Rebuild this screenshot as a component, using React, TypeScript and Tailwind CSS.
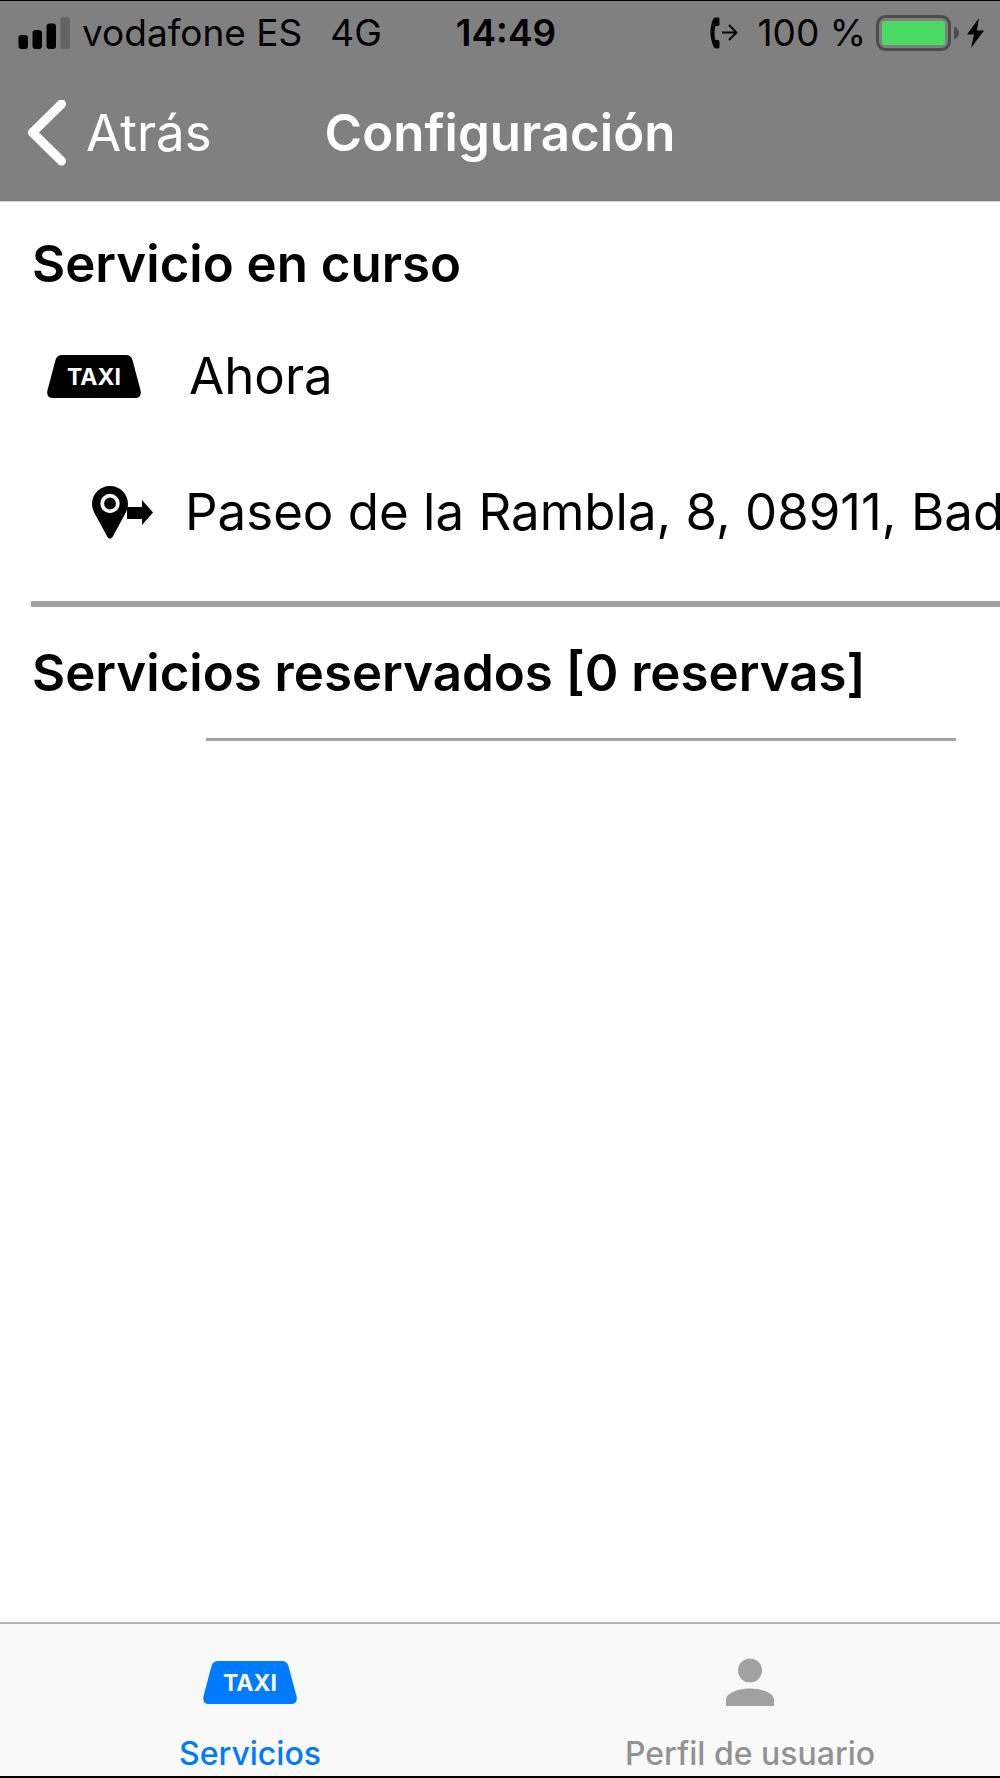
import React, { useState } from "react";

type Tab = "servicios" | "perfil";

const TaxiIcon = ({ textColor }: { textColor: string }) => (
  <svg width="94" height="43" viewBox="0 0 94 43" aria-hidden="true">
    <path
      d="M15 0H79Q84 0 85.500 5L93.700 36Q94.500 43 88 43H6Q-0.500 43 0.300 36L8.500 5Q10 0 15 0Z"
      fill="currentColor"
    />
    <text
      x="47"
      y="30"
      textAnchor="middle"
      fontSize="23"
      fontWeight="700"
      fill={textColor}
    >
      TAXI
    </text>
  </svg>
);

const PinIcon = () => (
  <svg width="61" height="53" viewBox="0 0 61 53" aria-hidden="true">
    <path d="M18 0C8 0 0 8 0 18C0 22 1.500 25.500 3.500 29L15.500 51Q18 54.500 20.500 51L32.500 29C34.500 25.500 36 22 36 18C36 8 28 0 18 0Z" />
    <circle cx="18" cy="17.500" r="7.800" fill="none" stroke="#fff" strokeWidth="3.800" />
    <path d="M35 21H50V14L61 26.500L50 39V33H35Z" />
  </svg>
);

const SignalIcon = () => (
  <svg width="52" height="32" viewBox="0 0 52 32" aria-hidden="true">
    <rect x="0.500" y="18" width="9.500" height="14" rx="3" />
    <rect x="14.500" y="13" width="9.500" height="19" rx="3" />
    <rect x="28.500" y="6.500" width="9.500" height="25.500" rx="3" />
    <rect x="42.500" y="0" width="9.500" height="32" rx="3" fill="#636363" />
  </svg>
);

const CallForwardIcon = () => (
  <svg width="28" height="32" viewBox="0 0 28 32" aria-hidden="true">
    <path d="M5 0.500H8Q9.500 0.500 9.500 2V7Q9.500 9 8 9H5.500Q3.500 16 5.500 23H8Q9.500 23 9.500 25V30Q9.500 31.500 8 31.500H6Q4 31.500 2.500 27Q-1.500 16 2 5Q3 1 5 0.500Z" />
    <path d="M12 15.500H26M19 8L26.500 15.500L19 23" fill="none" stroke="#000" strokeWidth="1.800" />
  </svg>
);

const BatteryIcon = () => (
  <svg width="83" height="36" viewBox="0 0 83 36" aria-hidden="true">
    <rect x="1.500" y="1.500" width="72" height="33" rx="8" fill="none" stroke="#4c4c4c" strokeWidth="3" />
    <rect x="6" y="6" width="63" height="24" rx="2.500" fill="#4cd964" />
    <path d="M78 11.500Q83 14 83 18Q83 22 78 24.500Z" fill="#4c4c4c" />
  </svg>
);

const BoltIcon = () => (
  <svg width="17" height="30" viewBox="0 0 17 30" aria-hidden="true">
    <path d="M12 0L0 16.500H7L4 30L17 12.500H10Z" />
  </svg>
);

const UserIcon = () => (
  <svg width="48" height="48" viewBox="0 0 48 48" fill="#a1a1a1" aria-hidden="true">
    <circle cx="24" cy="12.500" r="12" />
    <path d="M0 48V42C0 35 12 30.500 24 30.500S48 35 48 42V48Z" />
  </svg>
);

const StatusBar = () => (
  <div className="grid h-16 grid-cols-[1fr_auto_1fr] items-center pl-[18px] pr-[6px] text-[37px] text-black">
    <div className="flex items-center whitespace-nowrap">
      <SignalIcon />
      <span className="ml-3">vodafone ES</span>
      <span className="ml-7">4G</span>
    </div>
    <span className="font-semibold">14:49</span>
    <div className="flex items-center justify-end whitespace-nowrap pr-2.5">
      <CallForwardIcon />
      <span className="ml-5">100 %</span>
      <span className="ml-2.5">
        <BatteryIcon />
      </span>
      <span className="ml-2">
        <BoltIcon />
      </span>
    </div>
  </div>
);

const NavBar = () => (
  <div className="grid h-[136px] grid-cols-[1fr_auto_1fr] items-center px-7 text-[51px] leading-[60px] text-white">
    <button type="button" className="flex items-center gap-5 justify-self-start">
      <svg width="38" height="66" viewBox="0 0 38 66" aria-hidden="true">
        <path
          d="M33.500 4L4.500 32.500L33.500 61"
          fill="none"
          stroke="currentColor"
          strokeWidth="9"
          strokeLinecap="round"
          strokeLinejoin="round"
        />
      </svg>
      Atrás
    </button>
    <h1 className="font-semibold">Configuración</h1>
  </div>
);

const App = () => {
  const [tab, setTab] = useState<Tab>("servicios");

  return (
    <div className="flex min-h-screen flex-col overflow-x-hidden border-t border-b-2 border-black bg-white font-['Inter',sans-serif] text-black">
      <header className="border-b border-gray-300 bg-[#808080]">
        <StatusBar />
        <NavBar />
      </header>

      <main className="flex-1 text-[51px] leading-[60px]">
        <section className="pt-8">
          <h2 className="pl-8 font-semibold">Servicio en curso</h2>
          <ul className="mt-[52px] flex flex-col gap-[76px]">
            <li className="flex items-center gap-12 pl-[47px]">
              <TaxiIcon textColor="#fff" />
              <span>Ahora</span>
            </li>
            <li className="flex items-center gap-8 overflow-hidden whitespace-nowrap pl-[92px]">
              <span className="shrink-0">
                <PinIcon />
              </span>
              <span>Paseo de la Rambla, 8, 08911, Bad</span>
            </li>
          </ul>
        </section>
        <hr className="ml-[31px] mt-[59px] border-t-[6px] border-[#a1a1a1]" />
        <section className="pt-9">
          <h2 className="pl-8 font-semibold">Servicios reservados [0 reservas]</h2>
          <hr className="ml-[206px] mr-11 mt-[35px] border-t-[3px] border-[#a1a1a1]" />
        </section>
      </main>

      <nav className="grid grid-cols-2 border-t-2 border-[#b5b5b5] bg-[#f9f9f9] text-[32px] leading-9 font-medium">
        <button
          type="button"
          onClick={() => setTab("servicios")}
          aria-current={tab === "servicios" ? "page" : undefined}
          className="flex flex-col items-center gap-[30px] pt-[34px] pb-1 text-[#007aff]"
        >
          <span className="flex h-12 items-center">
            <TaxiIcon textColor="#f9f9f9" />
          </span>
          Servicios
        </button>
        <button
          type="button"
          onClick={() => setTab("perfil")}
          aria-current={tab === "perfil" ? "page" : undefined}
          className="flex flex-col items-center gap-[30px] pt-[34px] pb-1 text-[#929292]"
        >
          <UserIcon />
          Perfil de usuario
        </button>
      </nav>
    </div>
  );
};

export default App;
